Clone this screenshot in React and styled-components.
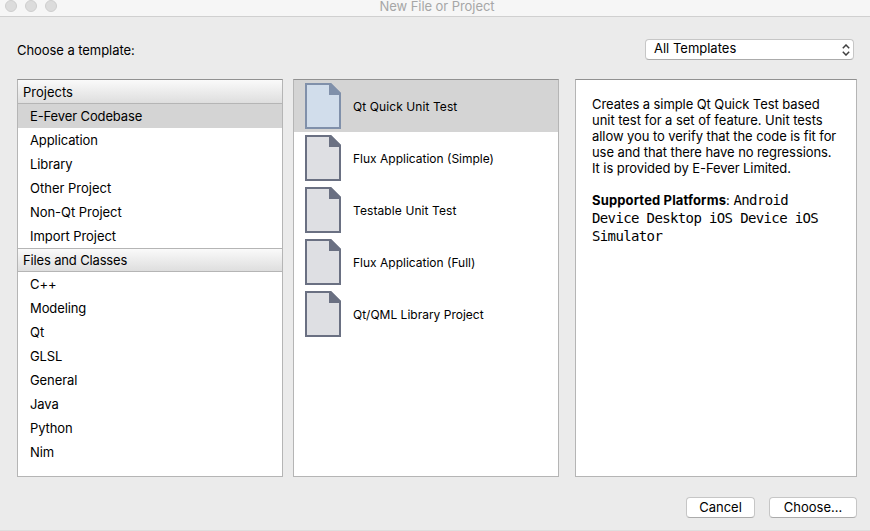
import React from 'react';
import styled, { createGlobalStyle } from 'styled-components';

const GlobalStyle = createGlobalStyle`
  * { box-sizing: border-box; }
  body {
    margin: 0;
    background: #ebebeb;
    color: #000;
    font: 13px/16px Inter, "Liberation Sans", sans-serif;
  }
`;

const Dialog = styled.div`
  display: flex;
  flex-direction: column;
  width: 870px;
  height: 531px;
  overflow: hidden;
  background: #ebebeb;
  border-bottom: 1px solid #dedede;
`;

const TitleBar = styled.header`
  display: grid;
  grid-template-columns: 1fr auto 1fr;
  height: 17px;
  flex: none;
  background: #f6f6f6;
  border-bottom: 1px solid #d0d0d0;
`;

const WindowControls = styled.div`
  display: flex;
  gap: 8px;
  padding-left: 5px;
`;

const WindowDot = styled.span`
  width: 12px;
  height: 12px;
  border-radius: 50%;
  background: #dcdcdc;
  border: 1px solid #cecece;
`;

const WindowTitle = styled.h1`
  margin: 0 0 0 4px;
  color: #a6a6a6;
  font-size: 13px;
  font-weight: 400;
  line-height: 12px;
`;

const Label = styled.span`
  white-space: nowrap;
  letter-spacing: ${({ $spacing = 0 }) => $spacing}px;
`;

const Toolbar = styled.div`
  display: flex;
  justify-content: space-between;
  align-items: center;
  height: 21px;
  margin: 22px 16px 0 17px;
`;

const TemplateFilter = styled.button`
  display: flex;
  align-items: center;
  justify-content: space-between;
  width: 209px;
  height: 21px;
  padding: 0 3px 3px 8px;
  border: 1px solid #c6c6c6;
  border-bottom-color: #ababab;
  border-radius: 4px;
  background: #fff;
  color: #000;
  font: inherit;
`;

const StepperIcon = styled.svg`
  display: block;
  width: 8px;
  height: 12px;
  margin-top: 3px;
`;

const Columns = styled.main`
  display: grid;
  grid-template-columns: 266px 266px 282px;
  column-gap: 0;
  justify-content: space-between;
  height: 398px;
  margin: 19px 13px 0 17px;
`;

const Panel = styled.section`
  border: 1px solid #b5b5b5;
  border-top-color: #919191;
  background: #fff;
  overflow: hidden;
  margin-left: ${({ $shift = 0 }) => $shift}px;
  margin-right: ${({ $shift = 0 }) => -$shift}px;
`;

const CategoryHeader = styled.div`
  height: 24px;
  padding: 4px 5px 0;
  line-height: 16px;
  background: linear-gradient(#fafafa, #dedede);
  border-bottom: 1px solid #b5b5b5;
  ${({ $divided }) => $divided && 'border-top: 1px solid #b5b5b5; padding-top: 3px;'}
`;

const CategoryItem = styled.div`
  height: 24px;
  padding: 4px 12px;
  background: ${({ $selected }) => ($selected ? '#d4d4d4' : 'transparent')};
`;

const TemplateItem = styled.div`
  display: flex;
  align-items: center;
  gap: 12px;
  height: 52px;
  padding-left: 11px;
  font-size: 12px;
  background: ${({ $selected }) => ($selected ? '#d4d4d4' : 'transparent')};
`;

const TemplateName = styled(Label)`
  padding-top: 1px;
`;

const FileIcon = styled.svg`
  display: block;
  width: 36px;
  height: 46px;
`;

const Description = styled(Panel)`
  padding: 16px;
`;

const Line = styled.div`
  height: ${({ $height = 16 }) => $height}px;
  line-height: ${({ $height = 16 }) => $height}px;
  white-space: nowrap;
  letter-spacing: ${({ $spacing = 0 }) => $spacing}px;
`;

const Platforms = styled.div`
  margin-top: 15px;
`;

const Strong = styled.b`
  letter-spacing: 0.14px;
`;

const Mono = styled.span`
  font-family: "DejaVu Sans Mono", monospace;
  font-size: 14px;
  letter-spacing: -0.63px;
`;

const Footer = styled.footer`
  display: flex;
  justify-content: flex-end;
  gap: 14px;
  margin: 20px 13px 0 0;
`;

const PushButton = styled.button`
  width: ${({ $width }) => $width}px;
  height: 21px;
  padding: 0 0 1px;
  border: 1px solid #c6c6c6;
  border-bottom-color: #ababab;
  border-radius: 4px;
  background: #fff;
  color: #000;
  font: inherit;
`;

const projects = [
  ['E-Fever Codebase', -0.12], ['Application', -0.1], ['Library', -0.1],
  ['Other Project', 0], ['Non-Qt Project', -0.05], ['Import Project', -0.06],
];

const files = [
  ['C++', -0.1], ['Modeling', -0.1], ['Qt', 0], ['GLSL', -0.1],
  ['General', -0.1], ['Java', -0.1], ['Python', -0.1], ['Nim', -0.1],
];

const templates = [
  ['Qt Quick Unit Test', 0.09], ['Flux Application (Simple)', 0],
  ['Testable Unit Test', 0.1], ['Flux Application (Full)', 0],
  ['Qt/QML Library Project', 0],
];

const description = [
  ['Creates a simple Qt Quick Test based', -0.08],
  ['unit test for a set of feature. Unit tests', -0.04],
  ['allow you to verify that the code is fit for', -0.07],
  ['use and that there have no regressions.', -0.08],
  ['It is provided by E-Fever Limited.', -0.08],
];

function DocumentIcon({ selected }) {
  const edge = selected ? '#8090aa' : '#6a7082';
  return (
    <FileIcon viewBox="0 0 36 46">
      <path d="M1 1H25.5L35 10.5V45H1Z" fill={selected ? '#d1ddeb' : '#dedfe3'} stroke={edge} strokeWidth="2" />
      <path d="M24 0H26L36 10V12H24Z" fill={edge} />
    </FileIcon>
  );
}

export default function App() {
  return (
    <Dialog>
      <GlobalStyle />
      <TitleBar>
        <WindowControls><WindowDot /><WindowDot /><WindowDot /></WindowControls>
        <WindowTitle><Label $spacing={-0.06}>New File or Project</Label></WindowTitle>
      </TitleBar>
      <Toolbar>
        <Label $spacing={-0.06}>Choose a template:</Label>
        <TemplateFilter>
          <Label>All Templates</Label>
          <StepperIcon viewBox="0 0 8 12" fill="none" stroke="#404040" strokeWidth="1.5">
            <path d="M0.8 4.2L4 1L7.2 4.2M0.8 7.8L4 11L7.2 7.8" />
          </StepperIcon>
        </TemplateFilter>
      </Toolbar>
      <Columns>
        <Panel>
          <CategoryHeader><Label>Projects</Label></CategoryHeader>
          {projects.map(([name, spacing], i) => (
            <CategoryItem key={name} $selected={i === 0}><Label $spacing={spacing}>{name}</Label></CategoryItem>
          ))}
          <CategoryHeader $divided><Label $spacing={-0.15}>Files and Classes</Label></CategoryHeader>
          {files.map(([name, spacing]) => (
            <CategoryItem key={name}><Label $spacing={spacing}>{name}</Label></CategoryItem>
          ))}
        </Panel>
        <Panel $shift={-3}>
          {templates.map(([name, spacing], i) => (
            <TemplateItem key={name} $selected={i === 0}>
              <DocumentIcon selected={i === 0} />
              <TemplateName $spacing={spacing}>{name}</TemplateName>
            </TemplateItem>
          ))}
        </Panel>
        <Description>
          {description.map(([text, spacing]) => <Line key={text} $spacing={spacing}>{text}</Line>)}
          <Platforms>
            <Line $height={18}><Strong>Supported Platforms</Strong>: <Mono>Android</Mono></Line>
            <Line $height={18}><Mono>Device Desktop iOS Device iOS</Mono></Line>
            <Line $height={18}><Mono>Simulator</Mono></Line>
          </Platforms>
        </Description>
      </Columns>
      <Footer>
        <PushButton $width={69}><Label>Cancel</Label></PushButton>
        <PushButton $width={88}><Label>Choose...</Label></PushButton>
      </Footer>
    </Dialog>
  );
}
